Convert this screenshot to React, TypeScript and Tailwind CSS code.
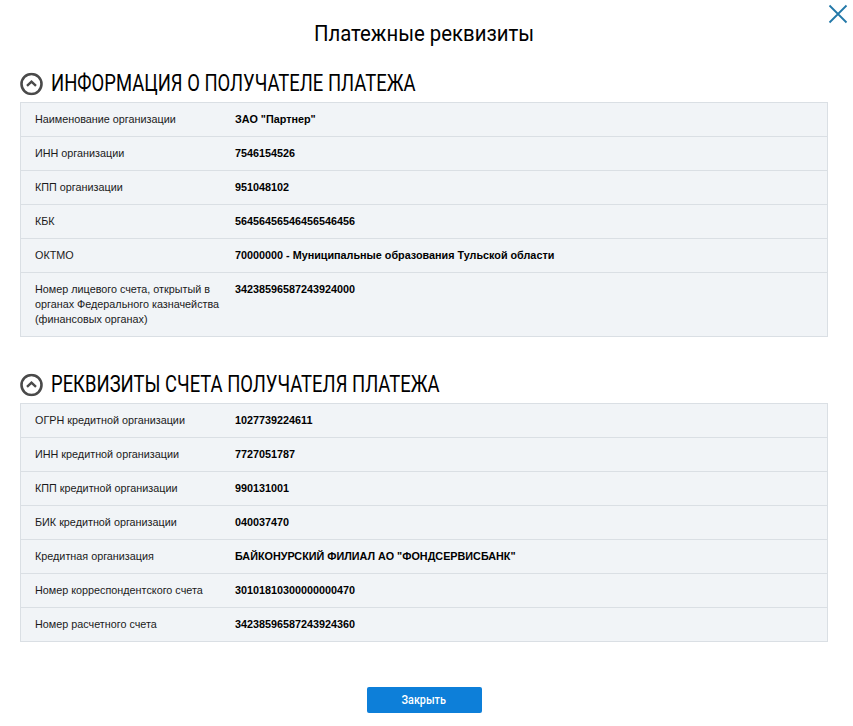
const rows1: [string, string][] = [
  ["Наименование организации", 'ЗАО "Партнер"'],
  ["ИНН организации", "7546154526"],
  ["КПП организации", "951048102"],
  ["КБК", "56456456546456546456"],
  ["ОКТМО", "70000000 - Муниципальные образования Тульской области"],
  ["Номер лицевого счета, открытый в органах Федерального казначейства (финансовых органах)", "34238596587243924000"],
];
const rows2: [string, string][] = [
  ["ОГРН кредитной организации", "1027739224611"],
  ["ИНН кредитной организации", "7727051787"],
  ["КПП кредитной организации", "990131001"],
  ["БИК кредитной организации", "040037470"],
  ["Кредитная организация", 'БАЙКОНУРСКИЙ ФИЛИАЛ АО "ФОНДСЕРВИСБАНК"'],
  ["Номер корреспондентского счета", "30101810300000000470"],
  ["Номер расчетного счета", "34238596587243924360"],
];

function Section({ title, rows }: { title: string; rows: [string, string][] }) {
  return (
    <section>
      <div className="flex items-center h-[34px] gap-[8px] mb-[1px]">
        <svg width="23" height="23" viewBox="0 0 23 23" fill="none" className="shrink-0 -translate-y-[0.5px]">
          <circle cx="11.5" cy="11.5" r="10" stroke="#4a4a4a" strokeWidth="2.6" />
          <path d="M7 13.4 L11.5 9.2 L16 13.4" stroke="#4a4a4a" strokeWidth="2.4" />
        </svg>
        <h2 className="font-['Roboto',sans-serif] text-[23px] leading-[34px] text-black origin-left scale-x-[0.802] whitespace-nowrap">{title}</h2>
      </div>
      <div className="border border-[#dadfe4] bg-[#f1f4f7] divide-y divide-[#dadfe4]">
        {rows.map(([k, v]) => (
          <div key={k} className="flex px-[14px] py-[9px] text-[10.8px] leading-[15px] text-[#1a1a1a]">
            <div className="w-[200px] shrink-0">{k}</div>
            <div className="font-bold text-black">{v}</div>
          </div>
        ))}
      </div>
    </section>
  );
}

export default function App() {
  return (
    <div className="relative w-[853px] h-[726px] bg-white px-[20px] font-['Liberation_Sans',Arial,sans-serif] overflow-hidden">
      <button className="absolute top-[4px] right-[5px]" aria-label="Закрыть">
        <svg width="20" height="20" viewBox="0 0 20 20" fill="none">
          <path d="M1.5 1.5 L18.5 18.5 M18.5 1.5 L1.5 18.5" stroke="#2278a8" strokeWidth="1.8" />
        </svg>
      </button>
      <h1 className="pt-[20px] text-center font-['Roboto',sans-serif] text-[22px] leading-[28px] text-black mb-[19px] w-[808px] scale-x-[0.925]">Платежные реквизиты</h1>
      <div className="w-[808px] flex flex-col gap-[31px]">
        <Section title="ИНФОРМАЦИЯ О ПОЛУЧАТЕЛЕ ПЛАТЕЖА" rows={rows1} />
        <Section title="РЕКВИЗИТЫ СЧЕТА ПОЛУЧАТЕЛЯ ПЛАТЕЖА" rows={rows2} />
      </div>
      <div className="w-[808px] flex justify-center mt-[45px]">
        <button className="w-[115px] h-[26px] rounded-[2px] bg-[#0d7fd9] text-white font-['Roboto',sans-serif] text-[12.5px] font-medium">
          <span className="inline-block scale-x-[0.86]">Закрыть</span>
        </button>
      </div>
    </div>
  );
}
